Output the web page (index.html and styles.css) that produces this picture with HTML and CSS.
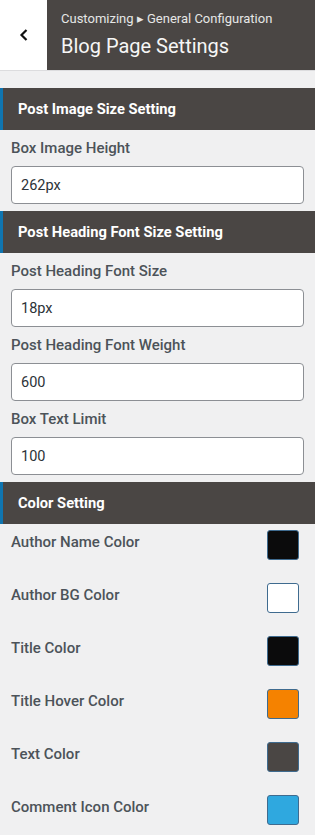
FILE: index.html
```html
<!DOCTYPE html>
<html lang="en">
<head>
    <meta charset="UTF-8">
    <meta name="viewport" content="width=device-width, initial-scale=1.0">
    <title>Blog Page Settings</title>
    <link rel="stylesheet" href="styles.css">
</head>
<body>
    <div class="panel-header">
        <button class="back-btn" aria-label="Back">
            <svg width="12" height="14" viewBox="0 0 12 14"><path d="M8.5 2 L3.5 7 L8.5 12" fill="none" stroke="#111" stroke-width="2.2"/></svg>
        </button>
        <div class="panel-title">
            <span class="crumb">Customizing &#9656; General Configuration</span>
            <h1>Blog Page Settings</h1>
        </div>
    </div>

    <div class="controls">
        <h3 class="section-title">Post Image Size Setting</h3>
        <div class="field">
            <label>Box Image Height</label>
            <input type="text" value="262px">
        </div>

        <h3 class="section-title">Post Heading Font Size Setting</h3>
        <div class="field">
            <label>Post Heading Font Size</label>
            <input type="text" value="18px">
        </div>
        <div class="field">
            <label>Post Heading Font Weight</label>
            <input type="text" value="600">
        </div>
        <div class="field">
            <label>Box Text Limit</label>
            <input type="text" value="100">
        </div>

        <h3 class="section-title">Color Setting</h3>
        <div class="colors">
            <div class="color-row"><span>Author Name Color</span><span class="swatch" style="background:#0b0b0c"></span></div>
            <div class="color-row"><span>Author BG Color</span><span class="swatch" style="background:#ffffff"></span></div>
            <div class="color-row"><span>Title Color</span><span class="swatch" style="background:#0b0b0c"></span></div>
            <div class="color-row"><span>Title Hover Color</span><span class="swatch" style="background:#f58200"></span></div>
            <div class="color-row"><span>Text Color</span><span class="swatch" style="background:#4a4644"></span></div>
            <div class="color-row"><span>Comment Icon Color</span><span class="swatch" style="background:#2fa8df"></span></div>
        </div>
    </div>
</body>
</html>
```

FILE: styles.css
```css
body {
    margin: 0;
    background: #f0f0f1;
    font-family: Roboto, "Liberation Sans", sans-serif;
    color: #4c5359;
}
.panel-header {
    display: flex;
    height: 70px;
    border-bottom: 1px solid #dcdcde;
}
.back-btn {
    width: 47px;
    border: none;
    background: #fff;
    display: flex;
    align-items: center;
    justify-content: center;
    padding: 0;
}
.panel-title {
    flex: 1;
    background: #4a4644;
    padding: 11px 0 0 14px;
}
.crumb {
    display: block;
    font-size: 13px;
    color: #e6e6e6;
    line-height: 16px;
}
.panel-title h1 {
    margin: 6px 0 0;
    font-size: 20px;
    font-weight: 400;
    color: #f6f6f6;
    line-height: 26px;
}
.controls {
    padding-top: 17px;
}
.section-title {
    margin: 0;
    height: 42px;
    line-height: 42px;
    background: #4a4644;
    border-left: 3px solid #0f75b0;
    padding-left: 15px;
    font-size: 14.7px;
    font-weight: 700;
    color: #fff;
}
.field {
    padding: 0 11px;
}
.field label {
    display: block;
    font-size: 15px;
    font-weight: 500;
    line-height: 20px;
    margin: 8px 0;
}
.field input {
    display: block;
    box-sizing: border-box;
    width: 100%;
    height: 38px;
    border: 1px solid #8c8f94;
    border-radius: 4px;
    background: #fff;
    padding: 0 9px;
    font-family: Roboto, "Liberation Sans", sans-serif;
    font-size: 14.5px;
    color: #2c3338;
}
.controls > .field + .section-title {
    margin-top: 7px;
}
.colors {
    padding: 6px 16px 0 11px;
}
.color-row {
    display: flex;
    align-items: center;
    justify-content: space-between;
    height: 30px;
    margin-bottom: 23px;
    font-size: 15px;
    font-weight: 500;
}
.color-row span:first-child {
    position: relative;
    top: -3px;
}
.swatch {
    width: 30px;
    height: 28px;
    border: 1px solid #3f6b8f;
    border-radius: 3px;
}
```
